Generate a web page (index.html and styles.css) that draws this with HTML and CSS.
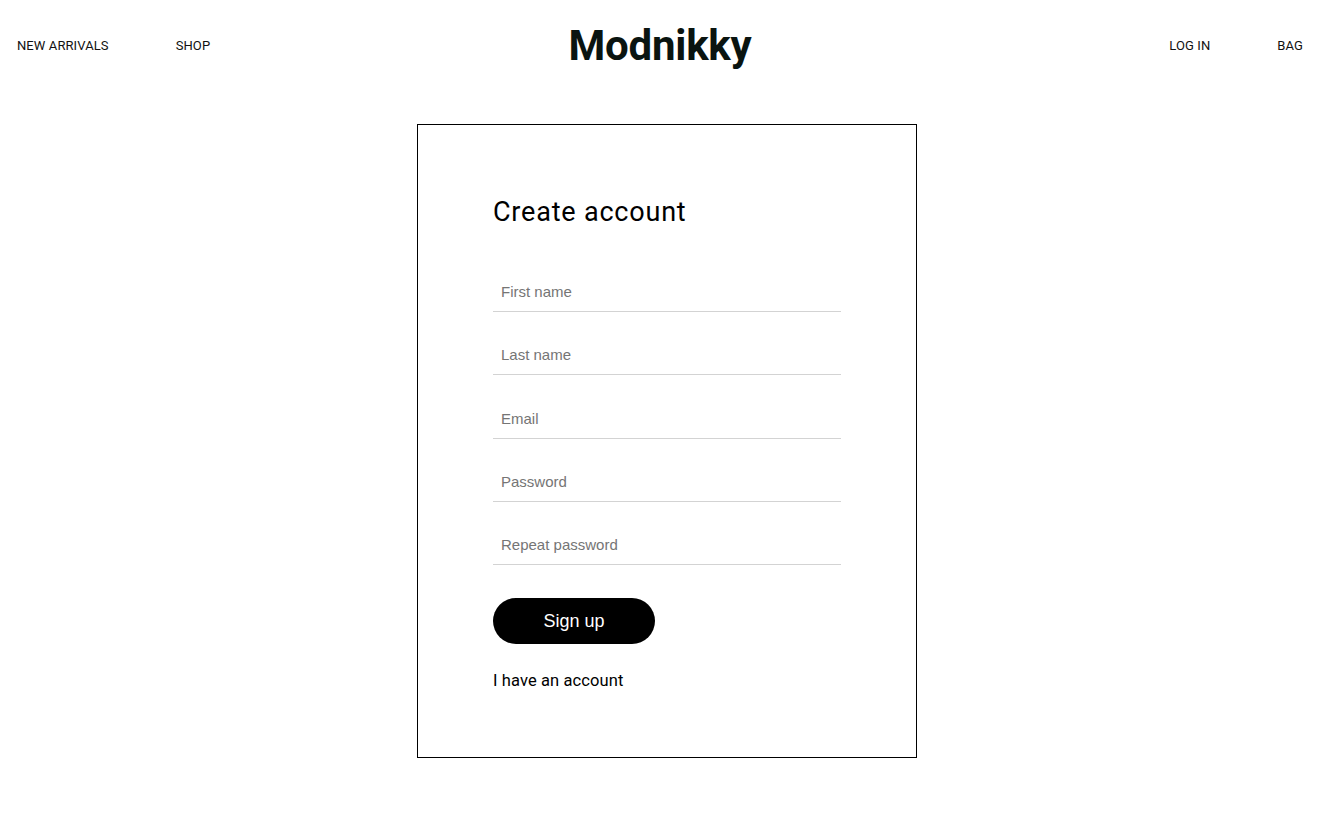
FILE: index.html
```html
<!DOCTYPE html>
<html lang="en">
<head>
<meta charset="utf-8">
<title>Modnikky — Create account</title>
<link rel="stylesheet" href="styles.css">
</head>
<body>
<header class="header">
  <nav class="nav nav-left">
    <a class="nav-link" href="#">New arrivals</a>
    <a class="nav-link" href="#">Shop</a>
  </nav>
  <a class="logo" href="#">Modnikky</a>
  <nav class="nav nav-right">
    <a class="nav-link" href="#">Log in</a>
    <a class="nav-link" href="#">Bag</a>
  </nav>
</header>
<main class="main">
  <form class="card">
    <h1 class="title">Create account</h1>
    <div class="fields">
      <input class="field" type="text" placeholder="First name">
      <input class="field" type="text" placeholder="Last name">
      <input class="field" type="email" placeholder="Email">
      <input class="field" type="password" placeholder="Password">
      <input class="field" type="password" placeholder="Repeat password">
    </div>
    <button class="btn" type="button">Sign up</button>
    <a class="account-link" href="#">I have an account</a>
  </form>
</main>
</body>
</html>
```
FILE: styles.css
```css
* { box-sizing: border-box; }
body {
  margin: 0;
  background: #fff;
  color: #000;
  font-family: Roboto, "Liberation Sans", Arial, sans-serif;
}
a { color: inherit; text-decoration: none; }

.header {
  height: 90px;
  display: grid;
  grid-template-columns: 1fr auto 1fr;
  align-items: center;
  padding: 0 29px 0 17px;
}
.nav {
  display: flex;
  gap: 67px;
}
.nav-right { justify-content: flex-end; }
.nav-link {
  font-size: 13px;
  text-transform: uppercase;
  letter-spacing: 0.1px;
  color: #111;
}
.logo {
  font-size: 42px;
  font-weight: 700;
  color: #0a1410;
  letter-spacing: -0.25px;
}

.main {
  display: flex;
  justify-content: center;
  padding-top: 34px;
  padding-left: 2px;
}
.card {
  width: 500px;
  border: 1px solid #000;
  padding: 70px 75px 66px 75px;
  display: flex;
  flex-direction: column;
  align-items: flex-start;
}
.title {
  margin: 0;
  font-size: 27px;
  font-weight: 400;
  line-height: 34px;
  letter-spacing: 0.8px;
}
.fields {
  width: 348px;
  margin-top: 20px;
  display: flex;
  flex-direction: column;
}
.field {
  height: 40px;
  margin-top: 23.2px;
  border: none;
  border-bottom: 1px solid #d3d3d3;
  padding: 0 8px;
  font-family: "Liberation Sans", Arial, sans-serif;
  font-size: 15px;
  outline: none;
  background: transparent;
}
.field::placeholder { color: #757575; }
.btn {
  margin-top: 33.5px;
  width: 162px;
  height: 46px;
  border: none;
  border-radius: 23px;
  background: #000;
  color: #fff;
  font-family: "Liberation Sans", Arial, sans-serif;
  font-size: 18px;
  padding-top: 2px;
  cursor: pointer;
}
.account-link {
  margin-top: 26.5px;
  font-size: 16.5px;
  line-height: 20px;
  letter-spacing: 0.1px;
  color: #000;
}
```
